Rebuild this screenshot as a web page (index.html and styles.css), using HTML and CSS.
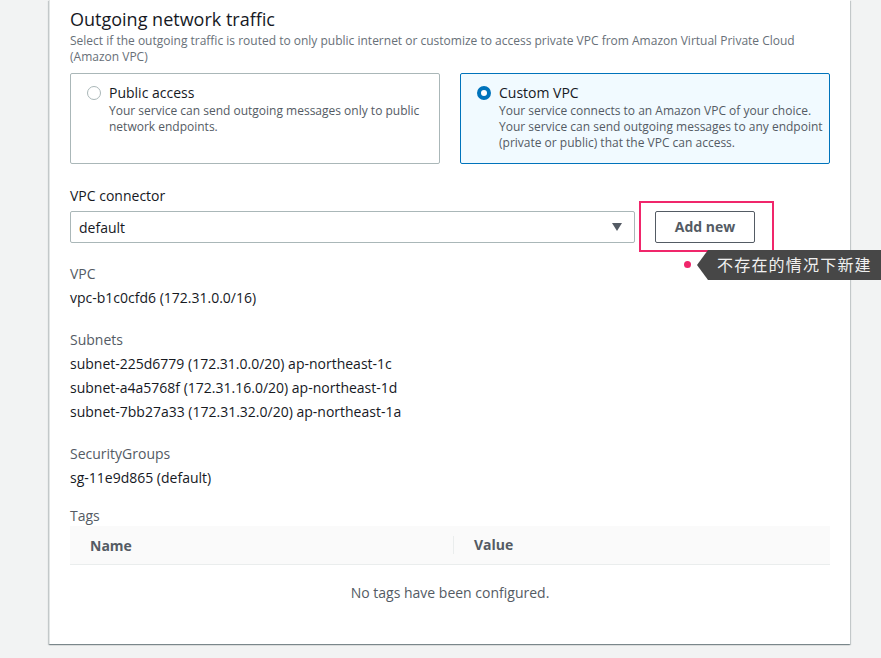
FILE: index.html
```html
<!DOCTYPE html>
<html>
<head>
<meta charset="utf-8">
<link rel="stylesheet" href="styles.css">
</head>
<body>
<div class="panel">
  <h2 class="title">Outgoing network traffic</h2>
  <p class="desc">Select if the outgoing traffic is routed to only public internet or customize to access private VPC from Amazon Virtual Private Cloud<br>(Amazon VPC)</p>
  <div class="tiles">
    <div class="tile">
      <span class="radio"></span>
      <div class="tile-body">
        <div class="tile-title">Public access</div>
        <div class="tile-desc">Your service can send outgoing messages only to public<br>network endpoints.</div>
      </div>
    </div>
    <div class="tile tile-selected">
      <span class="radio radio-on"></span>
      <div class="tile-body">
        <div class="tile-title">Custom VPC</div>
        <div class="tile-desc">Your service connects to an Amazon VPC of your choice.<br>Your service can send outgoing messages to any endpoint<br>(private or public) that the VPC can access.</div>
      </div>
    </div>
  </div>

  <div class="field-label">VPC connector</div>
  <div class="select-row">
    <div class="select">
      <span>default</span>
      <svg class="caret" width="10" height="8" viewBox="0 0 10 8"><path d="M0 0 H10 L5 8 Z" fill="#545b64"/></svg>
    </div>
    <button class="btn">Add new</button>
    <div class="highlight"></div>
    <div class="dot"></div>
    <div class="tooltip">不存在的情况下新建</div>
  </div>

  <div class="kv">
    <div class="kv-label">VPC</div>
    <div class="kv-value">vpc-b1c0cfd6 (172.31.0.0/16)</div>
  </div>
  <div class="kv">
    <div class="kv-label">Subnets</div>
    <div class="kv-value">subnet-225d6779 (172.31.0.0/20) ap-northeast-1c</div>
    <div class="kv-value">subnet-a4a5768f (172.31.16.0/20) ap-northeast-1d</div>
    <div class="kv-value">subnet-7bb27a33 (172.31.32.0/20) ap-northeast-1a</div>
  </div>
  <div class="kv">
    <div class="kv-label">SecurityGroups</div>
    <div class="kv-value">sg-11e9d865 (default)</div>
  </div>

  <div class="tags-label">Tags</div>
  <div class="table">
    <div class="thead">
      <div class="th">Name</div>
      <div class="th th-div">Value</div>
    </div>
    <div class="empty">No tags have been configured.</div>
  </div>
</div>
</body>
</html>
```
FILE: styles.css
```css
* { box-sizing: border-box; }
html, body { margin: 0; height: 100%; }
body {
  background: #f2f3f3;
  font-family: "Open Sans", "Noto Sans CJK SC", sans-serif;
  color: #16191f;
  padding: 0 31px 0 49px;
  overflow: hidden;
}
.panel {
  background: #fff;
  border-left: 1px solid #e3e6e6;
  padding: 7px 20px 41px 20px;
  box-shadow: 0 1px 1px 0 rgba(0,28,36,.3), 1px 1px 1px 0 rgba(0,28,36,.15), -1px 1px 1px 0 rgba(0,28,36,.15);
}
.title {
  margin: 0;
  font-size: 18px;
  font-weight: 400;
  line-height: 24px;
}
.desc {
  margin: 2px 0 8px;
  font-size: 12px;
  line-height: 16px;
  color: #687078;
}
.tiles {
  display: grid;
  grid-template-columns: minmax(0, 1fr) minmax(0, 1fr);
  gap: 20px;
  height: 91px;
}
.tile {
  border: 1px solid #aab7b8;
  border-radius: 2px;
  padding: 9px 4px 10px 16px;
  display: flex;
  gap: 8px;
  white-space: nowrap;
  overflow: hidden;
}
.tile-selected {
  border-color: #0073bb;
  background: #f1faff;
}
.radio {
  flex: none;
  width: 14px;
  height: 14px;
  margin-top: 3px;
  border: 1px solid #aab7b8;
  border-radius: 50%;
  background: #fff;
}
.radio-on {
  border: 4px solid #0073bb;
}
.tile-title {
  font-size: 14px;
  line-height: 20px;
}
.tile-desc {
  font-size: 12px;
  line-height: 16px;
  color: #545b64;
}
.field-label {
  margin-top: 22px;
  font-size: 14px;
  line-height: 20px;
}
.select-row {
  position: relative;
  margin-top: 4px;
  display: flex;
  gap: 20px;
  align-items: center;
}
.select {
  width: 565px;
  height: 32px;
  border: 1px solid #aab7b8;
  border-radius: 2px;
  margin-top: 1px;
  padding: 0 12px 0 8px;
  display: flex;
  align-items: center;
  justify-content: space-between;
  font-size: 14px;
}
.caret { display: block; }
.btn {
  width: 100px;
  height: 32px;
  border: 1px solid #545b64;
  border-radius: 2px;
  background: #fff;
  color: #545b64;
  font-family: inherit;
  font-weight: 700;
  font-size: 14px;
  padding: 0;
}
.highlight {
  position: absolute;
  left: 569px;
  top: -9px;
  width: 135px;
  height: 51px;
  border: 2px solid #f0266b;
}
.dot {
  position: absolute;
  left: 614px;
  top: 51px;
  width: 7px;
  height: 7px;
  border-radius: 50%;
  background: #f0266b;
}
.tooltip {
  position: absolute;
  left: 638px;
  top: 40px;
  height: 30px;
  width: 180px;
  background: #474747;
  color: #f0f0f0;
  font-size: 16px;
  line-height: 30px;
  padding-left: 9px;
  white-space: nowrap;
  letter-spacing: 1.2px;
}
.tooltip::before {
  content: "";
  position: absolute;
  left: -11px;
  top: 0;
  border-style: solid;
  border-width: 15px 11px 15px 0;
  border-color: transparent #474747 transparent transparent;
}
.kv {
  margin-top: 19px;
}
.kv + .kv { margin-top: 18px; }
.kv-label {
  font-size: 14px;
  line-height: 24px;
  color: #545b64;
}
.kv-value {
  font-size: 14px;
  line-height: 24px;
}
.tags-label {
  margin-top: 16px;
  font-size: 14px;
  line-height: 20px;
  color: #545b64;
}
.table { margin-top: 0; }
.thead {
  display: grid;
  grid-template-columns: 383px 1fr;
  height: 39px;
  align-items: center;
  background: #fafafa;
  border-bottom: 1px solid #eaeded;
}
.th {
  font-size: 14px;
  font-weight: 700;
  color: #545b64;
  padding-left: 20px;
}
.th-div {
  border-left: 1px solid #eaeded;
  line-height: 18px;
}
.empty {
  text-align: center;
  padding-top: 18px;
  font-size: 14px;
  line-height: 20px;
  color: #545b64;
}
```
